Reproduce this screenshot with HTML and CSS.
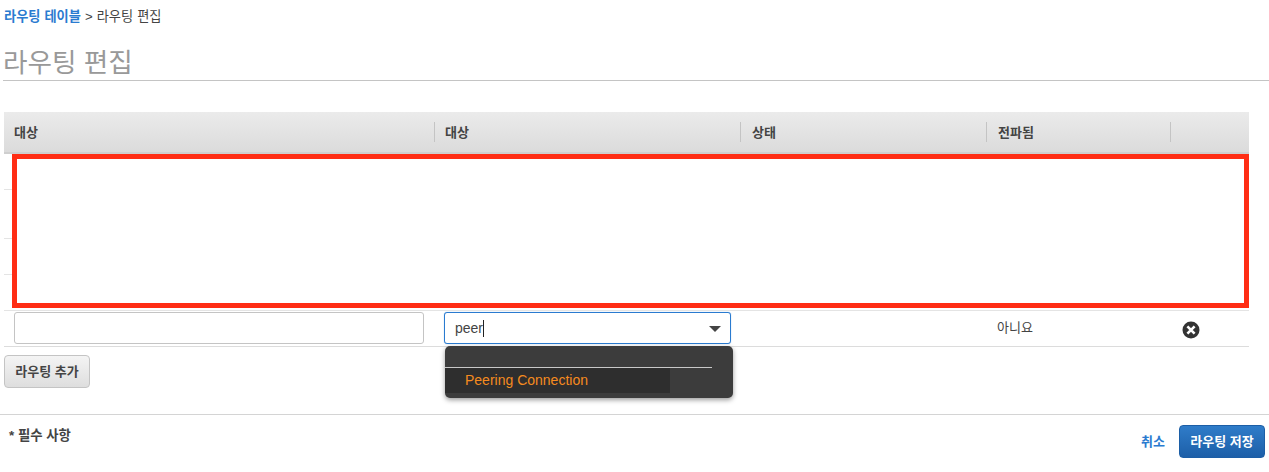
FILE: index.html
```html
<!DOCTYPE html>
<html lang="ko">
<head>
<meta charset="utf-8">
<title>라우팅 편집</title>
<link rel="stylesheet" href="styles.css">
</head>
<body>
<nav class="crumbs"><a class="link" href="#">라우팅 테이블</a> &gt; 라우팅 편집</nav>
<h1 class="title">라우팅 편집</h1>
<section class="routes">
  <div class="row head">
    <div class="cell"><span>대상</span></div>
    <div class="cell sep tight"><span>대상</span></div>
    <div class="cell sep"><span>상태</span></div>
    <div class="cell sep"><span>전파됨</span></div>
    <div class="cell sep"></div>
  </div>
  <div class="hidden-rows">
    <div class="ghost g1"></div>
    <div class="ghost g2"></div>
    <div class="ghost g3"></div>
    <div class="ghost g4"></div>
    <div class="redact"></div>
  </div>
  <div class="row edit">
    <div class="cell"><input class="field" type="text" aria-label="대상"></div>
    <div class="cell target">
      <div class="combo"><span class="typed">peer</span><span class="caret"></span><span class="arrow"></span></div>
      <div class="menu">
        <div class="menu-blank"></div>
        <div class="menu-item">Peering Connection</div>
      </div>
    </div>
    <div class="cell"></div>
    <div class="cell value">아니요</div>
    <div class="cell remove">
      <svg class="x-icon" viewBox="0 0 18 18" width="18" height="18" aria-hidden="true"><circle cx="9" cy="9" r="8.5" fill="#333"/><path d="M5.4 5.4 12.6 12.6M12.6 5.4 5.4 12.6" stroke="#fff" stroke-width="2.6"/></svg>
    </div>
  </div>
  <button class="btn add" type="button">라우팅 추가</button>
</section>
<footer class="foot">
  <strong class="req">* 필수 사항</strong>
  <div class="actions">
    <a class="link" href="#">취소</a>
    <button class="btn save" type="button">라우팅 저장</button>
  </div>
</footer>
</body>
</html>
```
FILE: styles.css
```css
* { box-sizing: border-box; }
html, body { margin: 0; padding: 0; }
body {
  width: 1269px;
  height: 472px;
  overflow: hidden;
  background: #fff;
  color: #444;
  font: 13px/16px "Liberation Sans", "Noto Sans CJK KR", sans-serif;
}
.link { color: #2a7bd0; font-weight: bold; text-decoration: none; }
.crumbs { padding: 9px 0 0 4px; height: 25px; color: #444; font-size: 13.2px; word-spacing: 0.4px; }
.title {
  margin: 20px 0 0 3px;
  height: 36px;
  padding: 0;
  border-bottom: 1px solid #c4c4c4;
  color: #999;
  font-size: 26.6px;
  font-weight: normal;
  line-height: 36px;
}
.routes { margin: 31px 20px 0 4px; }
.row { display: grid; grid-template-columns: 430px 306px 246px 184px 79px; }
.head {
  height: 42px;
  align-items: center;
  background: linear-gradient(#ebebeb, #dbdbdb);
  border-bottom: 2px solid #cfcfcf;
  color: #444;
  font-weight: bold;
}
.head .cell { height: 20px; line-height: 21px; padding-left: 10px; }
.head .sep { border-left: 1px solid #c4c4c4; padding-left: 11px; }
.head .tight { padding-left: 10px; }
.hidden-rows { position: relative; height: 157px; }
.ghost { position: absolute; left: 0; right: 0; border-top: 1px solid #e4e4e4; }
.g1 { top: 35px; }
.g2 { top: 84px; }
.g3 { top: 120px; }
.g4 { top: 156px; }
.redact {
  position: absolute;
  left: 8px;
  top: 0;
  width: 1237px;
  height: 154px;
  border: 5px solid #ff2d14;
  background: #fff;
}
.edit {
  height: 36px;
  align-items: start;
  border-bottom: 1px solid #dcdcdc;
}
.edit .cell { position: relative; }
.field {
  display: block;
  width: 410px;
  height: 32px;
  margin: 1px 0 0 10px;
  border: 1px solid #c4c4c4;
  border-radius: 3px;
  background: #fff;
}
.target { left: 10px; }
.combo {
  position: relative;
  width: 287px;
  height: 32px;
  margin-top: 1px;
  padding-left: 10px;
  display: flex;
  align-items: center;
  border: 1px solid #2a7bd0;
  border-radius: 3px;
  background: #fff;
  box-shadow: 0 0 1px rgba(42, 123, 208, 0.6);
  color: #444;
  font-size: 14px;
}
.caret { width: 1px; height: 17px; background: #222; }
.arrow {
  position: absolute;
  right: 9px;
  top: 13px;
  border-style: solid;
  border-width: 6px 6px 0;
  border-color: #444 transparent transparent;
}
.menu {
  position: absolute;
  left: 1px;
  top: 35px;
  width: 288px;
  height: 52px;
  padding-top: 21px;
  border-radius: 5px;
  background: #3c3c3c;
  box-shadow: 0 2px 5px rgba(0, 0, 0, 0.4);
  color: #f58b1f;
  font-size: 14px;
}
.menu-blank { width: 267px; border-top: 1px solid #c8c8c8; }
.menu-item { width: 225px; height: 25px; padding-left: 20px; line-height: 25px; background: #2e2e2e; }
.value { padding: 9px 0 0 11px; color: #444; font-size: 13px; line-height: 16px; }
.remove { padding: 10px 0 0 12px; }
.x-icon { display: block; }
.btn {
  font: bold 13px/16px "Liberation Sans", "Noto Sans CJK KR", sans-serif;
  border-radius: 4px;
  cursor: pointer;
  padding: 0;
}
.add {
  display: block;
  width: 86px;
  height: 33px;
  margin-top: 8px;
  border: 1px solid #c4c4c4;
  background: linear-gradient(#f4f4f4, #dedede);
  color: #444;
}
.foot {
  position: relative;
  margin-top: 26px;
  height: 58px;
  border-top: 1px solid #d4d4d4;
  display: flex;
  justify-content: space-between;
  padding: 0 4px 0 9px;
}
.req { margin-top: 13px; color: #444; font-size: 13.4px; }
.actions { display: flex; align-items: flex-start; gap: 14px; margin-top: 10px; }
.actions .link { margin-top: 9px; }
.save {
  width: 86px;
  height: 33px;
  border: 1px solid #1c5ea6;
  background: linear-gradient(#2f7cc9, #1d5fa8);
  color: #fff;
}
```
